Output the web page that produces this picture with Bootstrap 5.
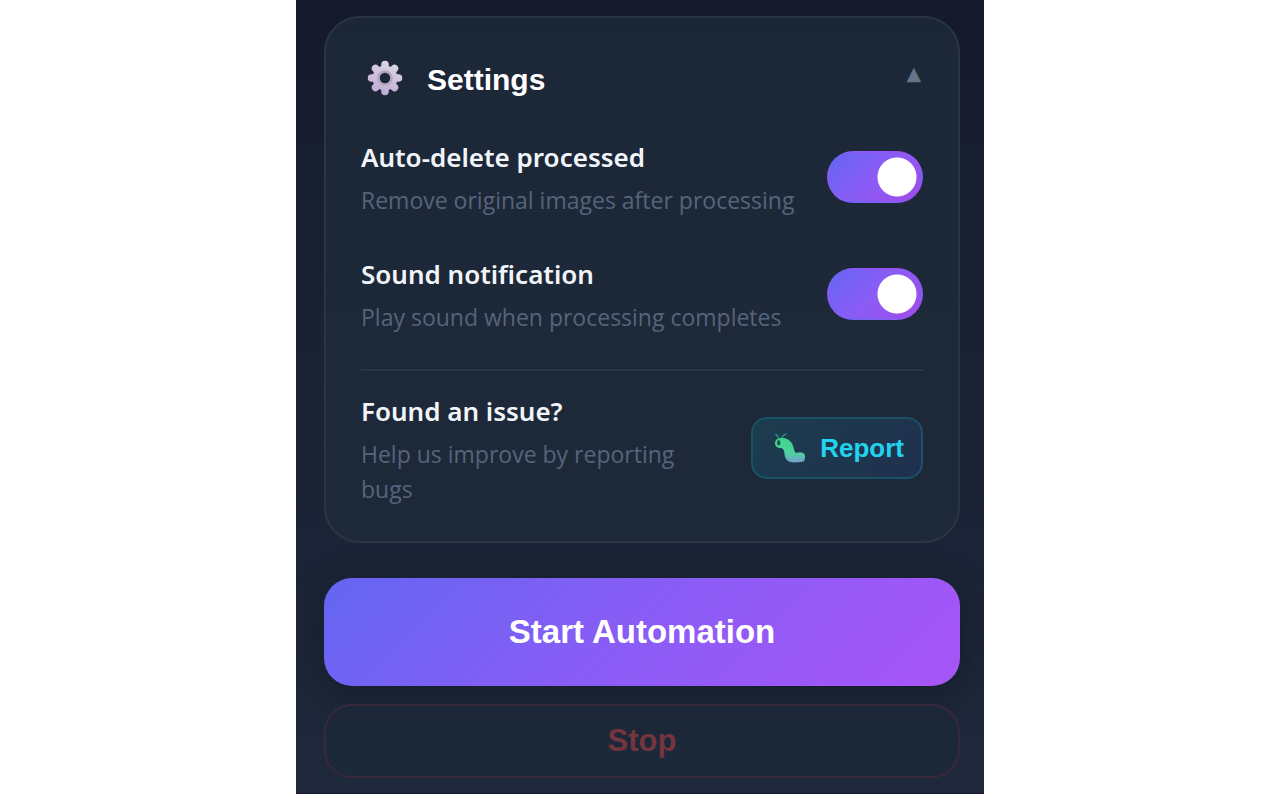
<!DOCTYPE html>
<html lang="en">
<head>
<meta charset="utf-8">
<meta name="viewport" content="width=device-width, initial-scale=1">
<title>Settings</title>
<link href="https://cdn.jsdelivr.net/npm/bootstrap@5.3.0/dist/css/bootstrap.min.css" rel="stylesheet">
<style>
  body { background: #fff; font-family: "Noto Sans", "Open Sans", sans-serif; }
  .panel {
    max-width: 688px;
    padding: 16px 24px 15px 28px;
    background: linear-gradient(180deg, #14192b 0, #182032 220px, #1b2436 520px, #1e293b 100%);
    border-bottom: 1px solid #141a2c;
  }
  .settings-card {
    padding: 36px 35px 34px;
    background: rgba(30, 42, 57, .8);
    border: 2px solid #293546;
    border-radius: 36px;
    margin-bottom: 35px;
  }
  .settings-head { height: 48px; margin-bottom: 33px; padding-left: 6px; }
  .arial { font-family: "Liberation Sans", Arial, sans-serif; font-weight: 700; }
  .settings-title { font-size: 30px; line-height: 48px; color: #fff; padding: 4px 0 0 24px; }
  .gear { width: 36px; height: 36px; }
  .chevron { font-family: "DejaVu Sans", sans-serif; font-size: 19px; line-height: 38px; color: #64748b; padding: 0 2px; }
  .chevron:hover { color: #94a3b8; }
  .options { display: grid; row-gap: 34px; }
  .setting { gap: 28px; }
  .setting-name { font-size: 26px; line-height: 44px; font-weight: 600; color: #f1f5f9; margin-bottom: 4px; }
  .setting-hint { font-family: "Open Sans", "Noto Sans", sans-serif; font-size: 23px; line-height: 35px; color: #56647b; }
  .toggle.form-check-input {
    width: 96px; height: 52px; margin: 0; border: 2px solid transparent; border-radius: 26px;
    background: radial-gradient(circle at 22px 50%, #fff 19px, transparent 20px), #475569;
  }
  .toggle.form-check-input:checked {
    background:
      radial-gradient(circle at 68px 50%, #fff 19px, transparent 20px),
      linear-gradient(135deg, #6366f1, #8b5cf6 50%, #a04be8);
  }
  .rule { height: 2px; background: #2a3647; margin: 34px 0 18px; }
  .report {
    height: 62px; padding: 0 17px 0 20px; gap: 13px; border: 2px solid #1a5268; border-radius: 16px;
    background: linear-gradient(135deg, #1c3d4e, #20304f); color: #22d3ee; font-size: 26px;
  }
  .report svg { width: 34px; height: 34px; }
  .start {
    height: 108px; border: 0; border-radius: 28px; color: #fff; font-size: 33px; margin-bottom: 18px;
    background: linear-gradient(135deg, #6366f1, #8b5cf6 50%, #a855f7);
    box-shadow: 0 8px 36px rgba(10, 15, 28, .4);
  }
  .stop.btn:disabled {
    height: 74px; border: 2px solid #38283a; border-radius: 28px; color: #74353f; font-size: 31px; opacity: 1;
    background: rgba(28, 40, 56, .5);
  }
</style>
</head>
<body>
<main class="panel mx-auto overflow-hidden">
  <section class="settings-card">
    <div class="settings-head d-flex align-items-center">
      <svg class="gear flex-shrink-0" viewBox="0 0 36 36" aria-hidden="true">
        <defs>
          <linearGradient id="gearFill" gradientUnits="userSpaceOnUse" x1="24" y1="2" x2="12" y2="34"><stop offset="0" stop-color="#ddd6e6"/><stop offset="1" stop-color="#bfabd5"/></linearGradient>
        </defs>
        <g stroke="url(#gearFill)" stroke-width="7.500" stroke-linecap="round">
          <path d="M18 4.500V31.500M4.500 18H31.500M8.500 8.500L27.500 27.500M27.500 8.500L8.500 27.500"/>
        </g>
        <circle cx="18" cy="18" r="12.500" fill="url(#gearFill)"/>
        <circle cx="18" cy="18" r="6.500" fill="#1d2638" stroke="#b3a8bd" stroke-width="2.500"/>
      </svg>
      <h2 class="settings-title arial mb-0 flex-grow-1">Settings</h2>
      <button type="button" class="chevron btn border-0 align-self-start" data-bs-toggle="collapse" data-bs-target="#options" aria-expanded="true" aria-controls="options" aria-label="Collapse settings">▲</button>
    </div>
    <div id="options" class="collapse show">
      <div class="options">
        <div class="setting d-flex align-items-center justify-content-between">
          <label for="autoDelete">
            <span class="setting-name d-block">Auto-delete processed</span>
            <span class="setting-hint d-block">Remove original images after processing</span>
          </label>
          <input id="autoDelete" class="toggle form-check-input flex-shrink-0" type="checkbox" role="switch" checked>
        </div>
        <div class="setting d-flex align-items-center justify-content-between">
          <label for="sound">
            <span class="setting-name d-block">Sound notification</span>
            <span class="setting-hint d-block">Play sound when processing completes</span>
          </label>
          <input id="sound" class="toggle form-check-input flex-shrink-0" type="checkbox" role="switch" checked>
        </div>
      </div>
      <div class="rule"></div>
      <div class="setting d-flex align-items-center justify-content-between">
        <div>
          <div class="setting-name">Found an issue?</div>
          <div class="setting-hint">Help us improve by reporting bugs</div>
        </div>
        <button type="button" class="report btn arial d-flex align-items-center flex-shrink-0">
          <svg viewBox="0 0 34 34" aria-hidden="true">
            <defs>
              <linearGradient id="bugFill" x1="0" y1="0" x2="0" y2="1"><stop offset="0" stop-color="#3fd58c"/><stop offset=".65" stop-color="#52cfa0"/><stop offset="1" stop-color="#749bd0"/></linearGradient>
            </defs>
            <path d="M2.500 3Q4.500 4.500 6 7.500M13.500 3Q9.500 4 8.500 7.500" fill="none" stroke="#2b8a78" stroke-width="1.600"/>
            <path d="M8 7C13 6.500 17.500 9 19.500 13.500C21.500 18 21 22 24 22Q27 20.500 30 22Q32.500 23 32 26.500Q32 31 28 31L21 31.500C14.500 31.500 11.500 27.500 11.500 22.500C11.300 19 10 17 7.500 17C3.500 17 2 14.500 2 12Q2 7.500 8 7Z" fill="url(#bugFill)"/>
            <ellipse cx="5.700" cy="11.800" rx="1.700" ry="2.800" fill="#205447"/>
          </svg>
          Report
        </button>
      </div>
    </div>
  </section>
  <button type="button" class="start btn arial w-100 d-block">Start Automation</button>
  <button type="button" class="stop btn arial w-100 d-block" disabled>Stop</button>
</main>
<script src="https://cdn.jsdelivr.net/npm/bootstrap@5.3.0/dist/js/bootstrap.bundle.min.js"></script>
</body>
</html>
